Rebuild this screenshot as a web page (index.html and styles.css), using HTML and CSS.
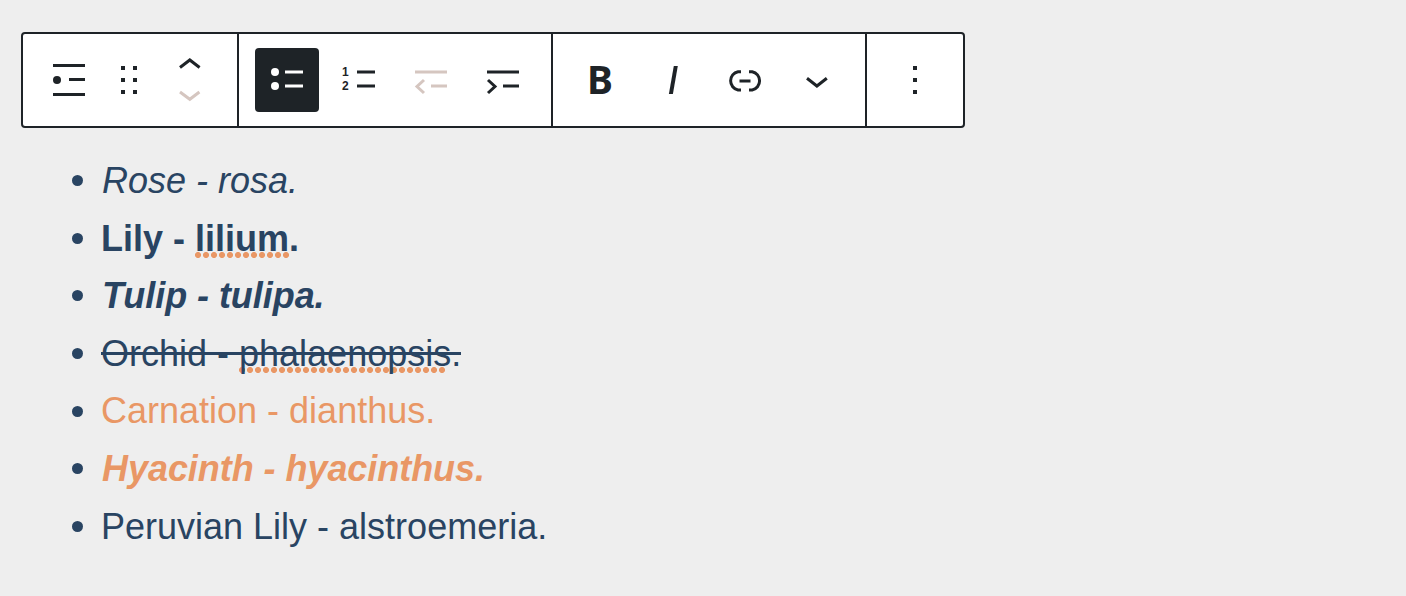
FILE: index.html
```html
<!DOCTYPE html>
<html lang="en">
<head>
<meta charset="utf-8">
<title>List block</title>
<link rel="stylesheet" href="styles.css">
</head>
<body>
<div class="toolbar" role="toolbar">
  <div class="group group-block">
    <svg class="icon" viewBox="0 0 48 48"><path d="M8 9.500h32M24 23.500h16M8 38.500h32"/><circle class="solid" cx="12" cy="24" r="4"/></svg>
    <svg class="icon" viewBox="0 0 48 48"><path class="solid" d="M16 10h4v4h-4zM28 10h4v4h-4zM16 22h4v4h-4zM28 22h4v4h-4zM16 34h4v4h-4zM28 34h4v4h-4z"/></svg>
    <svg class="icon mover" viewBox="0 0 48 48"><path d="M14 11.500 23.800 4l9.800 7.500"/><path class="muted" d="M14 36l9.800 7.300 9.600-7.300"/></svg>
  </div>
  <div class="group">
    <button class="button active"><svg class="icon" viewBox="0 0 48 48"><path d="M22 16h18M22 30h18"/><circle class="solid" cx="12" cy="16" r="4"/><circle class="solid" cx="12" cy="30" r="4"/></svg></button>
    <button class="button"><svg class="icon" viewBox="0 0 48 48"><path d="M22 16h18M22 30h18"/><text class="digit" x="7" y="20">1</text><text class="digit" x="7" y="34">2</text></svg></button>
    <button class="button"><svg class="icon muted" viewBox="0 0 48 48"><path d="M8 16h32M24 30h16M17 24l-7 6.500 7 6.500"/></svg></button>
    <button class="button"><svg class="icon" viewBox="0 0 48 48"><path d="M8 16h32M24 30h16M9 24l7 6.500-7 6.500"/></svg></button>
  </div>
  <div class="group">
    <button class="button"><svg class="icon" viewBox="0 0 48 48"><text class="bold-letter" x="10" y="37.700">B</text></svg></button>
    <button class="button"><svg class="icon" viewBox="0 0 48 48"><path class="solid" d="M24.800 10h4l-4.900 28h-4z"/></svg></button>
    <button class="button"><svg class="icon" viewBox="0 0 48 48"><path d="M20 15.700h-3a9 9.300 0 0 0 0 18.300h3M28 15.700h3.200a9 9.300 0 0 1 0 18.300H28M18.500 25h11"/></svg></button>
    <button class="button"><svg class="icon" viewBox="0 0 48 48"><path d="M14 22.200l9.900 7.800 9.900-7.800"/></svg></button>
  </div>
  <div class="group group-more">
    <svg class="icon" viewBox="0 0 48 48"><path class="solid" d="M22 10h4v4h-4zM22 22h4v4h-4zM22 34h4v4h-4z"/></svg>
  </div>
</div>
<ul class="flowers">
  <li><em>Rose - rosa.</em></li>
  <li><strong>Lily - <span class="spelling">lilium</span>.</strong></li>
  <li><strong class="tight"><em>Tulip - tulipa.</em></strong></li>
  <li><s>Orchid - <span class="spelling trimmed">phalaenopsis</span>.</s></li>
  <li><span class="accent">Carnation - dianthus.</span></li>
  <li><strong class="accent tight"><em>Hyacinth - hyacinthus.</em></strong></li>
  <li>Peruvian Lily - alstroemeria.</li>
</ul>
</body>
</html>
```
FILE: styles.css
```css
* {
  box-sizing: border-box;
}

body {
  margin: 0;
  padding: 32px 21px 0;
  background: #eee;
  color: #294462;
  font-family: "Liberation Sans", Arial, sans-serif;
}

.toolbar {
  display: flex;
  width: 944px;
  height: 96px;
  border: 2px solid #1e2327;
  border-radius: 4px;
  background: #fff;
  color: #1e2327;
}

.group {
  display: flex;
  align-items: center;
  gap: 8px;
  padding: 0 16px;
}

.group + .group {
  border-left: 2px solid #1e2327;
}

.group-block {
  width: 214px;
  gap: 12px;
  padding: 0 0 0 22px;
}

.mover {
  margin-left: 1px;
}

.group-more {
  flex: 1;
  justify-content: center;
  padding: 0;
}

.button {
  display: flex;
  width: 64px;
  height: 64px;
  padding: 8px;
  border: 0;
  border-radius: 4px;
  background: none;
  color: inherit;
}

.button.active {
  background: #1e2327;
  color: #fff;
}

.icon {
  flex: none;
  width: 48px;
  height: 48px;
  overflow: visible;
  fill: none;
  stroke: currentColor;
  stroke-width: 3;
}

.icon .solid,
.icon text {
  fill: currentColor;
  stroke: none;
}

.muted {
  color: #d5c6c0;
  stroke: #d5c6c0;
}

.digit {
  font: 700 12px "Liberation Sans", sans-serif;
}

.bold-letter {
  font: 700 39px "Noto Sans", sans-serif;
}

.flowers {
  margin: 24px 0 0;
  padding: 0 0 0 51px;
  list-style: none;
  font-size: 36px;
  line-height: 57.600px;
}

.flowers li {
  display: flex;
  align-items: center;
  gap: 18px;
  white-space: pre;
}

.flowers li::before {
  content: "";
  width: 11px;
  height: 11px;
  border-radius: 50%;
  background: #294462;
}

.flowers em {
  padding-left: 1px;
}

.flowers s {
  text-decoration: none;
  background: linear-gradient(#294462, #294462) 0 27px / 100% 3px no-repeat;
}

.tight {
  letter-spacing: -0.050px;
}

.spelling {
  background: radial-gradient(circle at 3px 3px, #e99765 2.700px, transparent 3.300px) 0 100% / 8px 7px repeat-x;
}

.spelling.trimmed {
  background:
    linear-gradient(#eee, #eee) 100% 100% / 5px 7px no-repeat,
    radial-gradient(circle at 3px 3px, #e99765 2.700px, transparent 3.300px) 0 100% / 8px 7px repeat-x;
}

.accent {
  color: #e99765;
}
```
